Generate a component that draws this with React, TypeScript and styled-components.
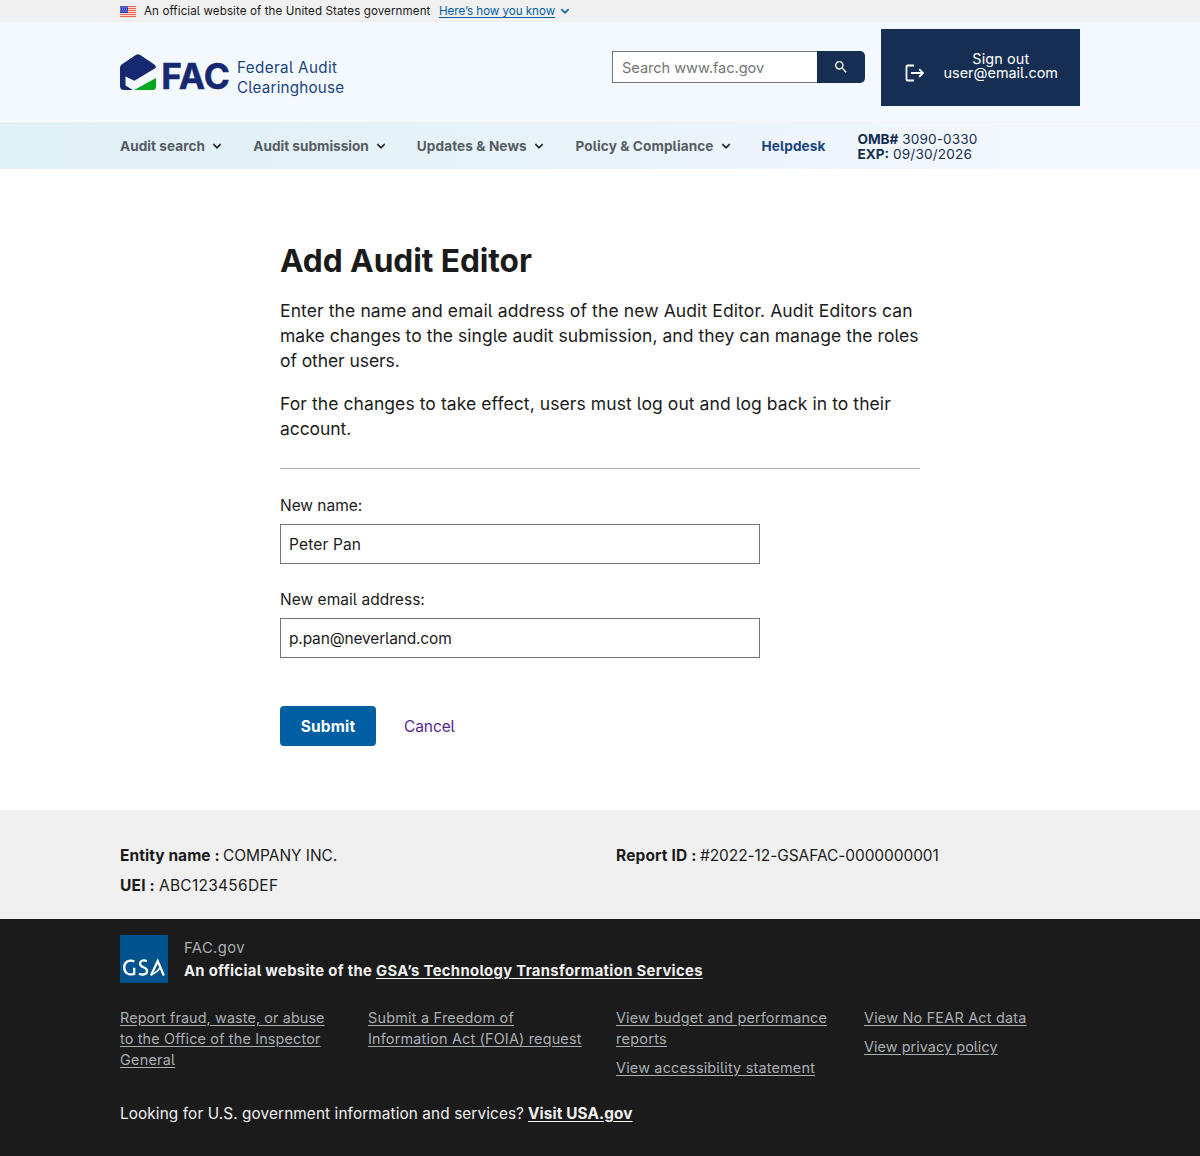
import React from 'react';
import styled, { createGlobalStyle } from 'styled-components';

const Global = createGlobalStyle`
  *, *::before, *::after { box-sizing: border-box; }
  body {
    margin: 0;
    background: #fff;
    color: #1b1b1b;
    font-family: Inter, "Liberation Sans", sans-serif;
    font-feature-settings: 'cv05';
  }
  p, h1 { margin: 0; }
`;

const T = styled.span<{ $ls?: number }>`
  letter-spacing: ${p => p.$ls ?? 0}px;
  white-space: nowrap;
`;

const Container = styled.div`
  width: 960px;
  margin: 0 auto;
  display: flex;
`;

/* Government banner */
const Banner = styled.div`
  height: 22px;
  background: #f0f0f0;
  font-size: 11.6px;
  line-height: 22px;
`;
const BannerRow = styled(Container)`
  align-items: center;
  height: 22px;
`;
const BannerText = styled.span`
  margin-left: 8px;
  width: 295px;
`;
const BannerLink = styled.a`
  color: #005ea2;
  text-decoration: underline;
  text-underline-offset: 2px;
  margin-right: 2px;
`;

/* Header */
const Header = styled.header`
  height: 101px;
  background: #f4f8ff;
  border-bottom: 1px solid #eff1f4;
`;
const HeaderRow = styled(Container)`
  align-items: flex-start;
`;
const Brand = styled.div`
  display: flex;
  width: 492px;
  padding-top: 32px;
`;
const BrandName = styled.div`
  padding: 4px 0 0 7px;
  font-size: 15.2px;
  line-height: 19.5px;
  color: #1a4480;
  display: flex;
  flex-direction: column;
`;
const Search = styled.form`
  display: flex;
  width: 253px;
  height: 32px;
  margin-top: 29px;
`;
const SearchField = styled.input`
  width: 205px;
  height: 32px;
  padding: 1px 8px 0 9px;
  border: 1px solid #71767a;
  border-right: 0;
  border-radius: 0;
  background: #fff;
  font: 14.6px Inter, sans-serif;
  letter-spacing: -0.05px;
  &::placeholder { color: #757575; opacity: 1; }
`;
const SearchButton = styled.button`
  width: 48px;
  height: 32px;
  padding: 0;
  border: 0;
  border-radius: 0 5px 5px 0;
  background: #162e51;
  display: flex;
  align-items: center;
  justify-content: center;
`;
const SignOut = styled.button`
  width: 199.5px;
  height: 77px;
  margin: 6.5px 0 0 15.5px;
  padding: 0 22px 0 24px;
  border: 0;
  background: #162e51;
  color: #fff;
  font: 14.4px/14.5px Inter, sans-serif;
  font-feature-settings: 'cv05';
  display: flex;
  align-items: center;
  justify-content: space-between;
  svg { margin-top: 12px; }
`;
const SignOutText = styled.span`
  display: flex;
  flex-direction: column;
  align-items: center;
  margin-top: -2px;
`;

/* Navigation */
const Nav = styled.nav`
  height: 46px;
  background: linear-gradient(90deg, #dff0f6 0%, #e7f3f9 46%, #f4f8ff 85%);
`;
const NavRow = styled(Container)`
  height: 46px;
  align-items: center;
`;
const NavItem = styled.div<{ $w: number; $accent?: boolean }>`
  width: ${p => p.$w}px;
  flex-shrink: 0;
  display: flex;
  align-items: center;
  gap: 4px;
  font-size: 13.6px;
  font-weight: 700;
  color: ${p => (p.$accent ? '#1a4480' : '#565c65')};
`;
const Omb = styled.div`
  padding-top: 1px;
  font-size: 13.6px;
  line-height: 14.6px;
  color: #162e51;
  white-space: nowrap;
`;

/* Main form */
const Main = styled.main`
  width: 640px;
  height: 641px;
  margin: 0 auto;
  padding-top: 72px;
`;
const Title = styled.h1`
  font-size: 31.7px;
  line-height: 40px;
  font-weight: 700;
  margin-bottom: 17px;
`;
const Lead = styled.p`
  font-size: 17.5px;
  line-height: 25px;
  margin-bottom: 18px;
  display: flex;
  flex-direction: column;
`;
const Rule = styled.hr`
  margin: 27px 0 26px;
  border: 0;
  height: 1px;
  background: #adadad;
`;
const Label = styled.label`
  display: block;
  font-size: 15.5px;
  line-height: 21px;
  margin-bottom: 8px;
`;
const Input = styled.input<{ $ls: number }>`
  display: block;
  width: 480px;
  height: 40px;
  padding: 0 8px;
  border: 1px solid #71767a;
  border-radius: 0;
  color: #1b1b1b;
  background: #fff;
  font: 15.5px Inter, sans-serif;
  font-feature-settings: 'cv05';
  letter-spacing: ${p => p.$ls}px;
  margin-bottom: 25px;
`;
const Actions = styled.div`
  display: flex;
  align-items: center;
  gap: 28px;
  margin-top: 48px;
  font-size: 15.5px;
`;
const Submit = styled.button`
  width: 96px;
  height: 40px;
  padding: 0;
  border: 0;
  border-radius: 4px;
  background: #005ea2;
  color: #fff;
  font: 700 15.5px Inter, sans-serif;
`;
const Cancel = styled.a`
  color: #54278f;
`;

/* Report summary */
const Summary = styled.section`
  height: 109px;
  padding-top: 31px;
  background: #f0f0f0;
  font-size: 15.5px;
  line-height: 30px;
`;
const SummaryColumn = styled.div`
  width: 496px;
  flex-shrink: 0;
  display: flex;
  flex-direction: column;
`;
const Pair = styled.div<{ $label: number }>`
  display: grid;
  grid-template-columns: ${p => p.$label}px auto;
  justify-content: start;
`;

/* Footer */
const Footer = styled.footer`
  height: 237px;
  padding-top: 16px;
  background: #1b1b1b;
  color: #f0f0f0;
  a { text-decoration: underline; text-underline-offset: 2px; }
`;
const Identity = styled.div`
  margin-left: 16px;
  padding-top: 2px;
  height: 48px;
  font-size: 14.8px;
  line-height: 23px;
`;
const Domain = styled.div`
  color: #a9aeb1;
`;
const Statement = styled.div`
  font-weight: 700;
  display: grid;
  grid-template-columns: 192px auto;
`;
const Links = styled(Container)`
  padding-top: 24px;
  height: 107px;
  color: #a9aeb1;
  font-size: 14.4px;
  line-height: 21px;
`;
const LinkColumn = styled.div`
  width: 248px;
  flex-shrink: 0;
  display: flex;
  flex-direction: column;
  gap: 8px;
`;
const FooterLink = styled.a`
  display: flex;
  flex-direction: column;
  align-items: flex-start;
  && { text-decoration: none; }
  span { text-decoration: underline; text-underline-offset: 2px; }
`;
const UsaGov = styled(Container)`
  padding-top: 12px;
  font-size: 15.3px;
  line-height: 23px;
  a { font-weight: 700; }
`;
const Question = styled.span`
  width: 408px;
`;

const Flag = () => (
  <svg width="16" height="11" viewBox="0 0 16 11">
    <rect width="16" height="11" fill="#fbd9d4" />
    {[0, 2, 4, 6, 8, 10].map(y => <rect key={y} y={y} width="16" height="1" fill="#f0604c" />)}
    <rect width="8" height="7" fill="#1d33b1" />
    {[1, 3, 5].map(y => [1, 3, 5, 7].map(x => <circle key={`${x}-${y}`} cx={x - (y === 3 ? 0.6 : 0)} cy={y} r="0.55" fill="#fff" />))}
  </svg>
);

const Chevron = ({ size = 16, color = '#1b1b1b' }: { size?: number; color?: string }) => (
  <svg width={size} height={size} viewBox="0 0 24 24" fill={color}>
    <path d="M16.59 8.59 12 13.17 7.41 8.59 6 10l6 6 6-6z" stroke={color} strokeWidth="0.5" />
  </svg>
);

const FacLogo = () => (
  <svg width="110" height="40" viewBox="0 0 110 40">
    <path d="M15.8 .9Q18 -.4 20.2 .9L34 10.2Q36 11.6 36 13.8L14.4 26.8 5.5 22.4V31.5L12.8 36H4Q0 36 0 32V13.8Q0 11.6 2 10.2Z" fill="#162970" />
    <path d="M36 24V32.5Q36 36 32.5 36H14.2Z" fill="#00a91c" />
    <text x="41.3" y="34.8" fill="#162970" stroke="#162970" strokeWidth="0.5" fontFamily="Inter, sans-serif" fontWeight="700" fontSize="35.500" textLength="68.500" lengthAdjust="spacingAndGlyphs">FAC</text>
  </svg>
);

const GsaLogo = () => (
  <svg width="48" height="48" viewBox="0 0 48 48">
    <rect width="48" height="48" fill="#00538e" />
    <g fill="none" stroke="#fff" strokeWidth="2.3">
      <path d="M14.4 26.500C9 24.200 4.200 27 4.200 32.400S8.600 40.800 14.200 38.800V32.800" />
      <path d="M26.800 26.100C23 24.600 20 25.800 20 28.700C20 32.800 27.100 31.700 27.100 35.900C27.100 39.700 22.400 40.200 18.900 38.700" />
      <path d="M31 40.500 37.700 26 43.800 40.500" />
      <path d="M32.500 39.200C35.500 37.800 38 36 39.800 33.200" strokeWidth="1.600" />
    </g>
  </svg>
);

const links: [string, number][][][] = [
  [[['Report fraud, waste, or abuse', 0.1], ['to the Office of the Inspector', 0.16], ['General', 0.26]]],
  [[['Submit a Freedom of', 0.23], ['Information Act (FOIA) request', 0.19]]],
  [[['View budget and performance', 0.16], ['reports', 0.31]], [['View accessibility statement', 0.2]]],
  [[['View No FEAR Act data', 0.22]], [['View privacy policy', 0.06]]],
];

const menu: [string, number, number][] = [
  ['Audit search', 133.3, 0.04],
  ['Audit submission', 163.5, 0],
  ['Updates & News', 158.7, 0.1],
  ['Policy & Compliance', 186, 0.1],
];

export default function App() {
  return (
    <>
      <Global />
      <Banner>
        <BannerRow>
          <Flag />
          <BannerText><T $ls={0.09}>An official website of the United States government</T></BannerText>
          <BannerLink><T $ls={-0.03}>Here’s how you know</T></BannerLink>
          <Chevron color="#005ea2" />
        </BannerRow>
      </Banner>
      <Header>
        <HeaderRow>
          <Brand>
            <FacLogo />
            <BrandName>
              <T $ls={0.38}>Federal Audit</T>
              <T $ls={0.22}>Clearinghouse</T>
            </BrandName>
          </Brand>
          <Search>
            <SearchField placeholder="Search www.fac.gov" />
            <SearchButton type="button" aria-label="Search">
              <svg width="16" height="16" viewBox="0 0 24 24" fill="#fff">
                <path d="M15.5 14h-.79l-.28-.27A6.471 6.471 0 0 0 16 9.500 6.500 6.500 0 1 0 9.500 16c1.610 0 3.090-.590 4.230-1.570l.270.280v.790l5 4.990L20.490 19l-4.990-5zm-6 0C7.010 14 5 11.990 5 9.500S7.010 5 9.500 5 14 7.010 14 9.500 11.990 14 9.500 14z" />
              </svg>
            </SearchButton>
          </Search>
          <SignOut>
            <svg width="20" height="18" viewBox="0 0 20 18" fill="none" stroke="#fff" strokeWidth="1.8">
              <path d="M9 1.500H2.500Q1.500 1.500 1.500 2.500V15.500Q1.500 16.500 2.500 16.500H9M6 9H18M14.200 5.200 18 9 14.200 12.800" />
            </svg>
            <SignOutText>
              <T $ls={0.12}>Sign out</T>
              <T $ls={0.02}>user@email.com</T>
            </SignOutText>
          </SignOut>
        </HeaderRow>
      </Header>
      <Nav>
        <NavRow>
          {menu.map(([label, w, ls]) => (
            <NavItem key={label} $w={w}><T $ls={ls}>{label}</T><Chevron /></NavItem>
          ))}
          <NavItem $w={96} $accent><T $ls={0.1}>Helpdesk</T></NavItem>
          <Omb>
            <div><b>OMB#</b> <T $ls={0.1}>3090-0330</T></div>
            <div><b>EXP:</b> <T $ls={0.17}>09/30/2026</T></div>
          </Omb>
        </NavRow>
      </Nav>
      <Main>
        <Title><T $ls={-0.07}>Add Audit Editor</T></Title>
        <Lead>
          <T $ls={0.11}>Enter the name and email address of the new Audit Editor. Audit Editors can</T>
          <T $ls={0.04}>make changes to the single audit submission, and they can manage the roles</T>
          <T $ls={-0.08}>of other users.</T>
        </Lead>
        <Lead>
          <T $ls={0.08}>For the changes to take effect, users must log out and log back in to their</T>
          <T $ls={-0.08}>account.</T>
        </Lead>
        <Rule />
        <Label><T $ls={-0.03}>New name:</T></Label>
        <Input $ls={0.15} defaultValue="Peter Pan" />
        <Label><T $ls={0.03}>New email address:</T></Label>
        <Input $ls={-0.16} defaultValue="p.pan@neverland.com" />
        <Actions>
          <Submit type="button"><T $ls={0.15}>Submit</T></Submit>
          <Cancel><T $ls={-0.1}>Cancel</T></Cancel>
        </Actions>
      </Main>
      <Summary>
        <Container>
          <SummaryColumn>
            <Pair $label={103}><b><T $ls={0.06}>Entity name :</T></b><T $ls={-0.05}>COMPANY INC.</T></Pair>
            <Pair $label={39}><b><T $ls={0.2}>UEI :</T></b><T $ls={0.26}>ABC123456DEF</T></Pair>
          </SummaryColumn>
          <SummaryColumn>
            <Pair $label={84}><b><T $ls={0.15}>Report ID :</T></b><T $ls={-0.08}>#2022-12-GSAFAC-0000000001</T></Pair>
          </SummaryColumn>
        </Container>
      </Summary>
      <Footer>
        <Container>
          <GsaLogo />
          <Identity>
            <Domain><T $ls={0.4}>FAC.gov</T></Domain>
            <Statement>
              <T $ls={0.32}>An official website of the</T>
              <a><T $ls={0.35}>GSA’s Technology Transformation Services</T></a>
            </Statement>
          </Identity>
        </Container>
        <Links>
          {links.map((column, i) => (
            <LinkColumn key={i}>
              {column.map((lines, j) => (
                <FooterLink key={j}>
                  {lines.map(([text, ls]) => <T key={text} $ls={ls}>{text}</T>)}
                </FooterLink>
              ))}
            </LinkColumn>
          ))}
        </Links>
        <UsaGov>
          <Question><T $ls={0.12}>Looking for U.S. government information and services?</T></Question>
          <a><T $ls={0.12}>Visit USA.gov</T></a>
        </UsaGov>
      </Footer>
    </>
  );
}
